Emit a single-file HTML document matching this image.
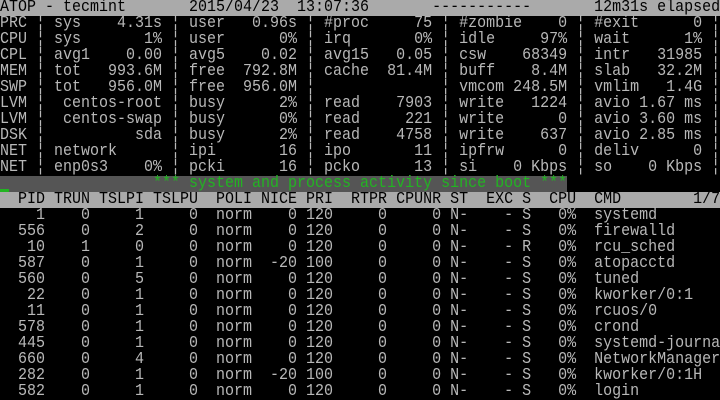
<!DOCTYPE html>
<html><head><meta charset="utf-8"><style>
html,body{margin:0;padding:0;background:#000;width:720px;height:400px;overflow:hidden}
pre{margin:0;font-family:"Liberation Mono","DejaVu Sans Mono",monospace;font-size:15px;line-height:16px;color:#b8b8b8;white-space:pre}
.l{display:block;height:16px;width:720px}
.l b{font-weight:normal;display:inline-block;transform:scaleY(1.12);transform-origin:50% 60%}
.inv{background:#aaa;color:#000}
.dg{background:#555;color:#22b422;width:567px;position:relative}
.cur{position:absolute;left:0;top:13px;width:9px;height:3px;background:#22b422}
</style></head><body><pre><span class="l inv"><b>ATOP - tecmint       2015/04/23  13:07:36       -----------       12m31s elapsed</b></span><span class="l"><b>PRC ¦ sys    4.31s ¦ user   0.96s ¦ #proc     75 ¦ #zombie    0 ¦ #exit      0 ¦</b></span><span class="l"><b>CPU ¦ sys       1% ¦ user      0% ¦ irq       0% ¦ idle     97% ¦ wait      1% ¦</b></span><span class="l"><b>CPL ¦ avg1    0.00 ¦ avg5    0.02 ¦ avg15   0.05 ¦ csw    68349 ¦ intr   31985 ¦</b></span><span class="l"><b>MEM ¦ tot   993.6M ¦ free  792.8M ¦ cache  81.4M ¦ buff    8.4M ¦ slab   32.2M ¦</b></span><span class="l"><b>SWP ¦ tot   956.0M ¦ free  956.0M ¦              ¦ vmcom 248.5M ¦ vmlim   1.4G ¦</b></span><span class="l"><b>LVM ¦  centos-root ¦ busy      2% ¦ read    7903 ¦ write   1224 ¦ avio 1.67 ms ¦</b></span><span class="l"><b>LVM ¦  centos-swap ¦ busy      0% ¦ read     221 ¦ write      0 ¦ avio 3.60 ms ¦</b></span><span class="l"><b>DSK ¦          sda ¦ busy      2% ¦ read    4758 ¦ write    637 ¦ avio 2.85 ms ¦</b></span><span class="l"><b>NET ¦ network      ¦ ipi       16 ¦ ipo       11 ¦ ipfrw      0 ¦ deliv      0 ¦</b></span><span class="l"><b>NET ¦ enp0s3    0% ¦ pcki      16 ¦ pcko      13 ¦ si    0 Kbps ¦ so    0 Kbps ¦</b></span><span class="l dg"><span class="cur"></span><b>                 *** system and process activity since boot ***</b></span><span class="l inv"><b>  PID TRUN TSLPI TSLPU  POLI NICE PRI  RTPR CPUNR ST  EXC S  CPU  CMD        1/7</b></span><span class="l"><b>    1    0     1     0  norm    0 120     0     0 N-    - S   0%  systemd</b></span><span class="l"><b>  556    0     2     0  norm    0 120     0     0 N-    - S   0%  firewalld</b></span><span class="l"><b>   10    1     0     0  norm    0 120     0     0 N-    - R   0%  rcu_sched</b></span><span class="l"><b>  587    0     1     0  norm  -20 100     0     0 N-    - S   0%  atopacctd</b></span><span class="l"><b>  560    0     5     0  norm    0 120     0     0 N-    - S   0%  tuned</b></span><span class="l"><b>   22    0     1     0  norm    0 120     0     0 N-    - S   0%  kworker/0:1</b></span><span class="l"><b>   11    0     1     0  norm    0 120     0     0 N-    - S   0%  rcuos/0</b></span><span class="l"><b>  578    0     1     0  norm    0 120     0     0 N-    - S   0%  crond</b></span><span class="l"><b>  445    0     1     0  norm    0 120     0     0 N-    - S   0%  systemd-journa</b></span><span class="l"><b>  660    0     4     0  norm    0 120     0     0 N-    - S   0%  NetworkManager</b></span><span class="l"><b>  282    0     1     0  norm  -20 100     0     0 N-    - S   0%  kworker/0:1H</b></span><span class="l"><b>  582    0     1     0  norm    0 120     0     0 N-    - S   0%  login</b></span></pre></body></html>
